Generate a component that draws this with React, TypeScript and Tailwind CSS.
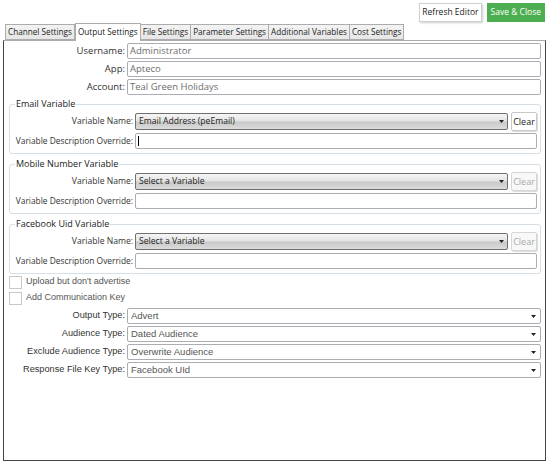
import React from 'react'

const ui = "font-['Segoe_UI','Open_Sans','Noto_Sans',sans-serif]"
const arial = "font-['Liberation_Sans',Arial,sans-serif]"

const tabs = ['Channel Settings', 'Output Settings', 'File Settings', 'Parameter Settings', 'Additional Variables', 'Cost Settings']

function TextField({ value }: { value?: string }) {
  return (
    <div className="h-[16px] border border-[#abadb3] rounded-[2px] bg-white px-[2px] text-[9.5px] leading-[14px] text-[#6d6d6d] whitespace-nowrap overflow-hidden">
      {value}
    </div>
  )
}

function Caret() {
  return (
    <svg width="5" height="3" viewBox="0 0 5 3" className="shrink-0">
      <path d="M0 0h5L2.5 3z" fill="#222" />
    </svg>
  )
}

function VariableSelect({ value }: { value: string }) {
  return (
    <div className="h-[17px] flex items-center border border-[#707070] rounded-[2px] px-[3px] bg-[linear-gradient(#f6f6f6_0%,#e4e4e4_45%,#c9c9c9_55%,#dcdcdc_100%)] text-[8.6px] text-[#222]">
      <span className="flex-1 truncate">{value}</span>
      <Caret />
    </div>
  )
}

function PlainSelect({ value }: { value: string }) {
  return (
    <div className={`h-[16px] flex items-center border border-[#abadb3] rounded-[2px] bg-white pl-[3px] pr-[4px] text-[9.5px] text-[#555] ${arial}`}>
      <span className="flex-1 truncate">{value}</span>
      <Caret />
    </div>
  )
}

function ClearButton({ enabled }: { enabled?: boolean }) {
  return (
    <div
      className={`w-[26px] h-[19px] flex items-center justify-center border rounded-[2px] text-[9px] shadow-[1px_1px_1px_rgba(0,0,0,0.15)] ${
        enabled ? 'border-[#c8c8c8] bg-white text-[#222]' : 'border-[#d6d6d6] bg-[#f8f8f8] text-[#a8a8a8]'
      }`}
    >
      Clear
    </div>
  )
}

function VariableGroup({ title, value, enabled, caret }: { title: string; value: string; enabled?: boolean; caret?: boolean }) {
  return (
    <fieldset className="border border-[#d5dfe5] rounded-[3px] px-[3px] pb-[4px] pt-[2px] min-w-0">
      <legend className="px-[1px] ml-[2px] text-[9px] text-[#222] leading-[12px]">{title}</legend>
      <div className="grid grid-cols-[120px_1fr] gap-x-[2px] gap-y-[2px] items-center">
        <div className="text-right text-[8.6px] text-[#333]">Variable Name:</div>
        <div className="flex items-center gap-[3px]">
          <div className="flex-1">
            <VariableSelect value={value} />
          </div>
          <ClearButton enabled={enabled} />
        </div>
        <div className="text-right text-[8.4px] text-[#333] whitespace-nowrap">Variable Description Override:</div>
        <div className="h-[16px] border border-[#abadb3] rounded-[2px] bg-white flex items-center px-[2px]">
          {caret && <span className="w-px h-[10px] bg-black" />}
        </div>
      </div>
    </fieldset>
  )
}

function Check({ label }: { label: string }) {
  return (
    <div className="flex items-center gap-[4px] h-[16px]">
      <div className="w-[13px] h-[13px] border border-[#c8c8c8] bg-white" />
      <span className={`text-[9px] text-[#555] ${arial}`}>{label}</span>
    </div>
  )
}

export default function App() {
  return (
    <div className={`w-[549px] h-[463px] bg-white flex flex-col ${ui}`}>
      {/* toolbar */}
      <div className="flex justify-end gap-[5px] pt-[3px] pr-[4px] h-[22px]">
        <div className="h-[19px] px-[2px] flex items-center bg-white border border-[#cfcfcf] shadow-[1px_1px_2px_rgba(0,0,0,0.2)] text-[8.5px] text-[#222]">
          Refresh Editor
        </div>
        <div className="h-[19px] px-[4px] flex items-center bg-[#4cae50] text-[8.5px] text-white">Save &amp; Close</div>
      </div>

      {/* tab strip */}
      <div className="flex items-end pl-[5px] h-[18px]">
        {tabs.map((t, i) =>
          i === 1 ? (
            <div
              key={t}
              className="h-[18px] px-[2px] border border-b-0 border-[#acacac] bg-white text-[8.2px] text-[#222] leading-[16px] relative z-10 -mb-px"
            >
              {t}
            </div>
          ) : (
            <div
              key={t}
              className="h-[16px] px-[2px] border border-[#acacac] -ml-px first:ml-0 bg-[linear-gradient(#f3f3f3,#e6e6e6)] text-[8.2px] text-[#222] leading-[14px]"
            >
              {t}
            </div>
          )
        )}
      </div>

      {/* tab body */}
      <div className="flex-1 mx-[3px] mb-[2px] border border-[#444] border-t-[#acacac] pt-[2px] pr-[4px] pl-[1px]">
        <div className="grid grid-cols-[120px_1fr] gap-x-[2px] gap-y-[2px] items-center">
          <div className="text-right text-[9.5px] text-[#333]">Username:</div>
          <TextField value="Administrator" />
          <div className="text-right text-[9.5px] text-[#333]">App:</div>
          <TextField value="Apteco" />
          <div className="text-right text-[9.5px] text-[#333]">Account:</div>
          <TextField value="Teal Green Holidays" />
        </div>

        <div className="flex flex-col gap-[4px] mt-[3px] pl-[4px]">
          <VariableGroup title="Email Variable" value="Email Address (peEmail)" enabled caret />
          <VariableGroup title="Mobile Number Variable" value="Select a Variable" />
          <VariableGroup title="Facebook Uid Variable" value="Select a Variable" />
        </div>

        <div className="flex flex-col mt-0 pl-[4px]">
          <Check label="Upload but don't advertise" />
          <Check label="Add Communication Key" />
        </div>

        <div className={`grid grid-cols-[120px_1fr] gap-x-[2px] gap-y-[2px] items-center mt-[2px] ${arial}`}>
          <div className="text-right text-[9.2px] text-[#333]">Output Type:</div>
          <PlainSelect value="Advert" />
          <div className="text-right text-[9.2px] text-[#333]">Audience Type:</div>
          <PlainSelect value="Dated Audience" />
          <div className="text-right text-[9.2px] text-[#333]">Exclude Audience Type:</div>
          <PlainSelect value="Overwrite Audience" />
          <div className="text-right text-[9.2px] text-[#333]">Response File Key Type:</div>
          <PlainSelect value="Facebook UId" />
        </div>
      </div>
    </div>
  )
}
